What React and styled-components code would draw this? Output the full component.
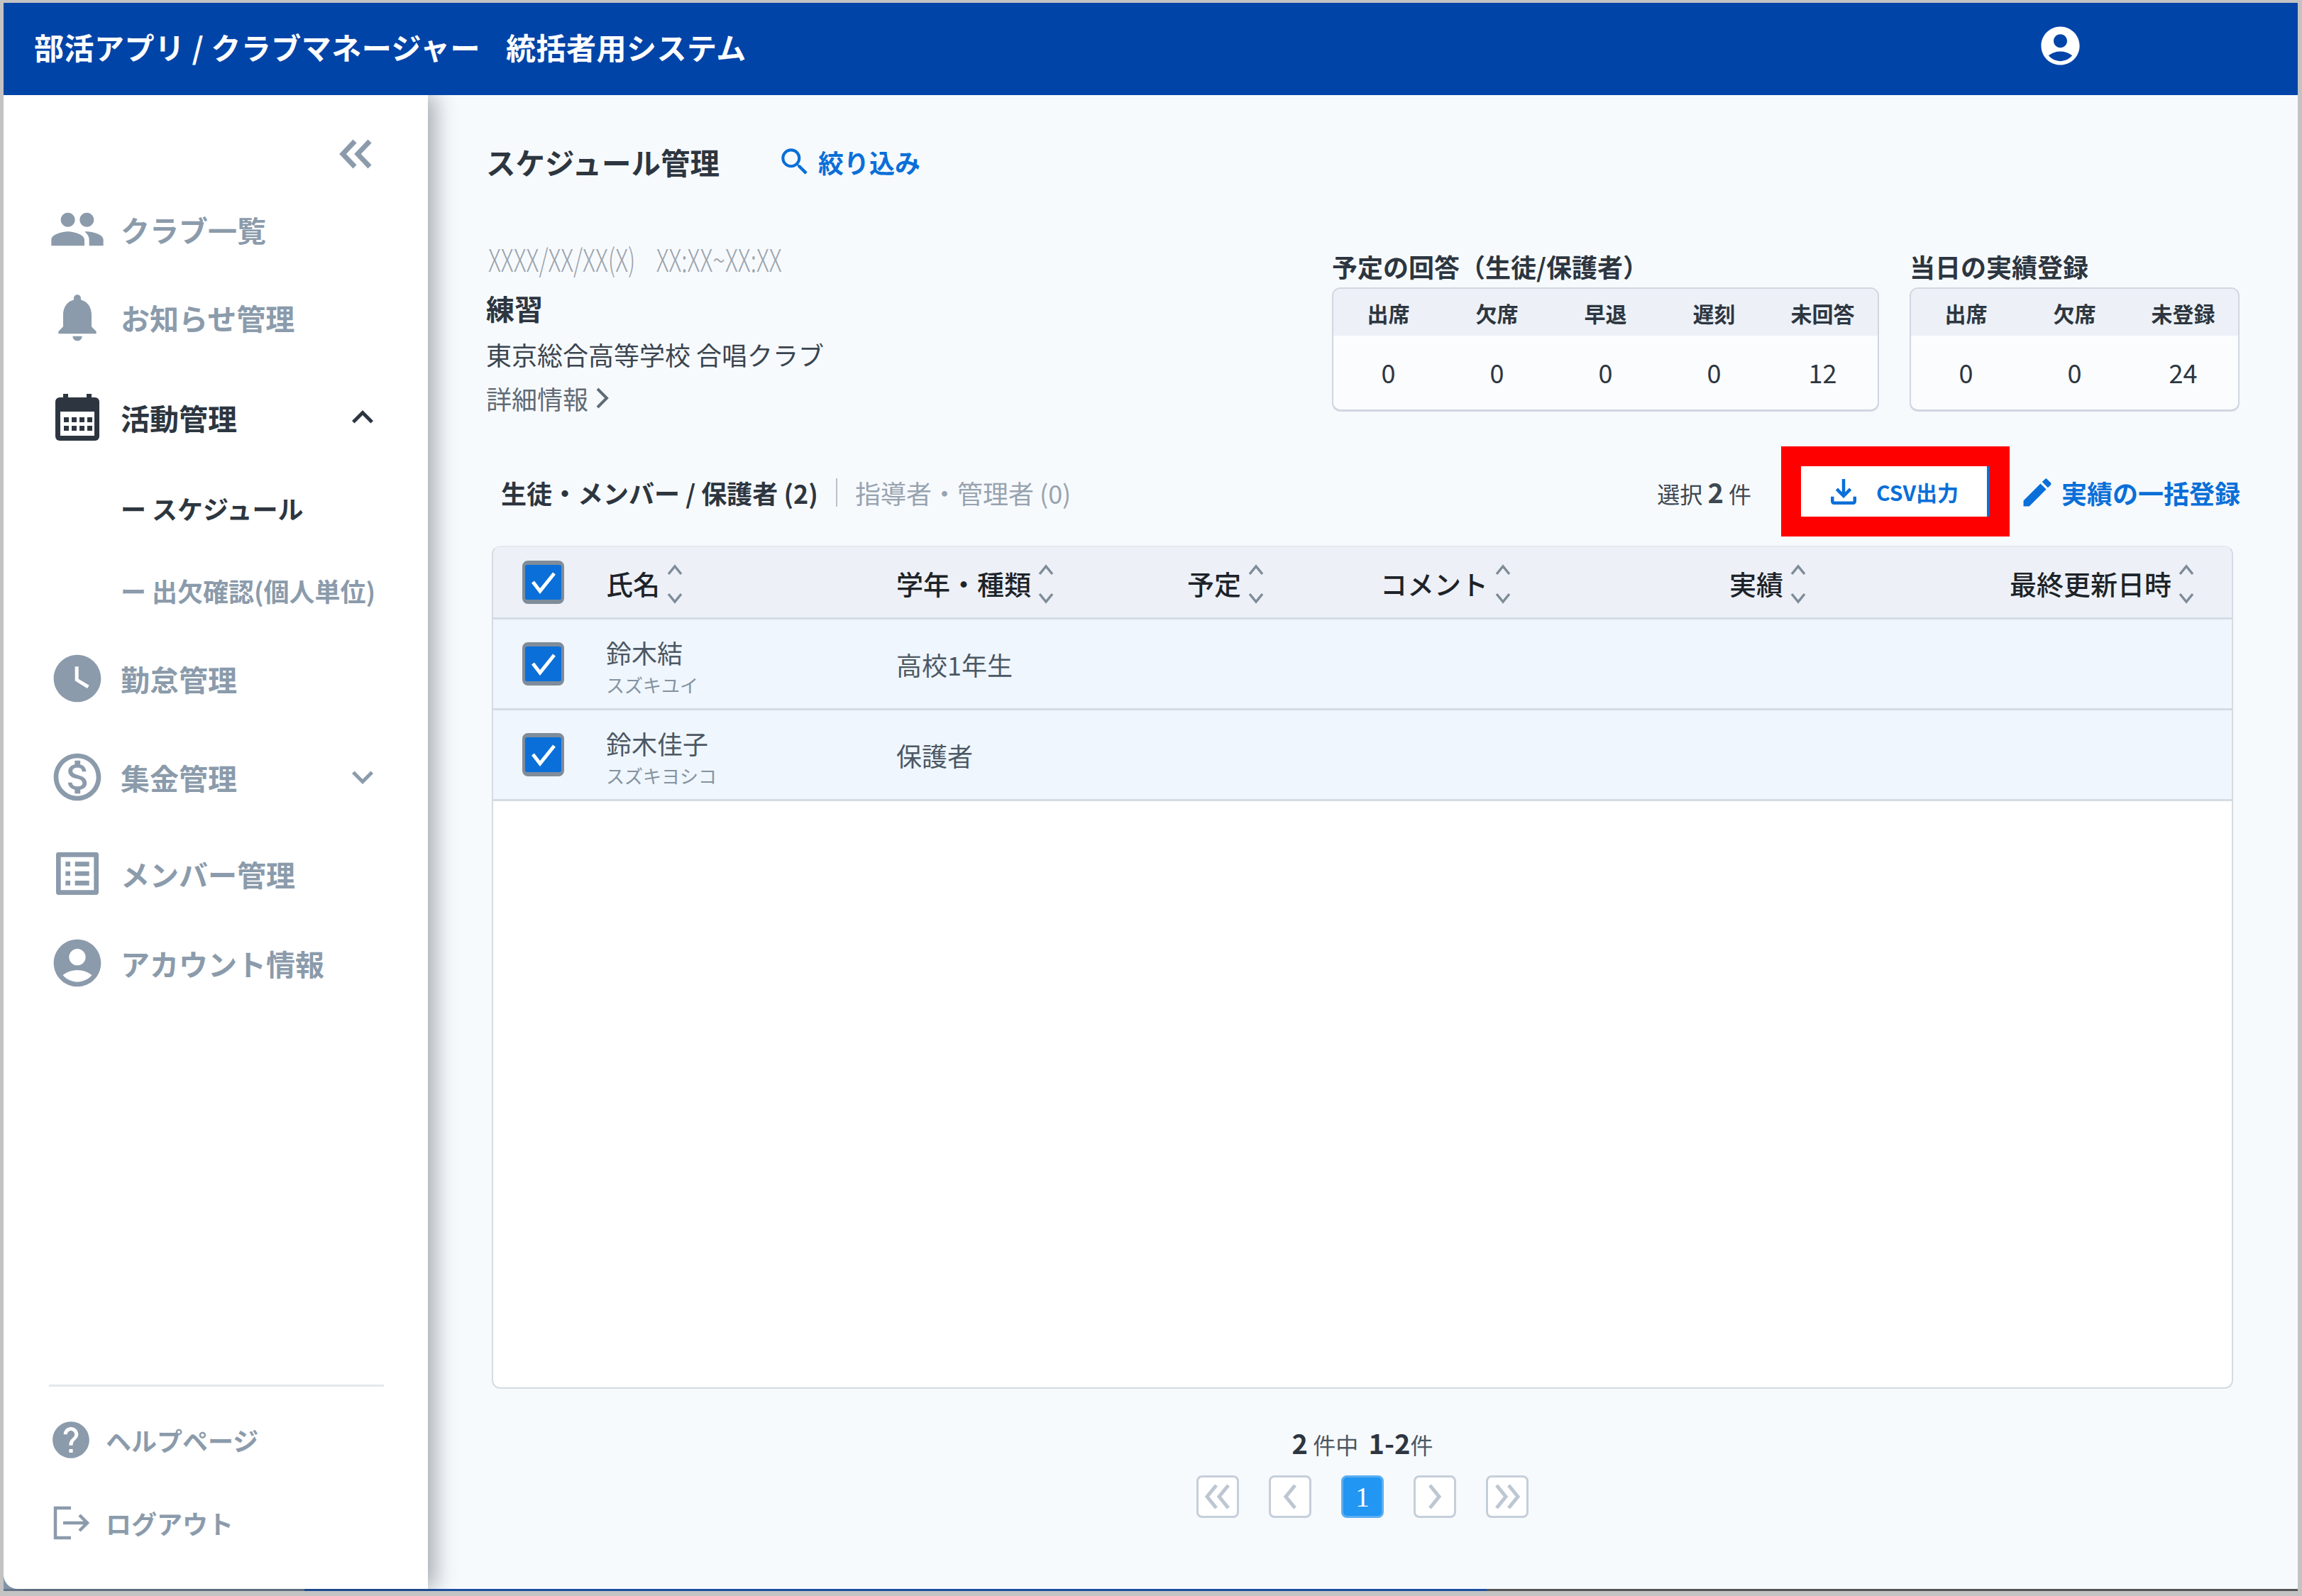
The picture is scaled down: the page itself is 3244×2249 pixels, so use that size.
import styled, { createGlobalStyle } from "styled-components";
import {
  MdPeople,
  MdNotifications,
  MdWatchLater,
  MdOutlineMonetizationOn,
  MdOutlineListAlt,
  MdAccountCircle,
  MdHelp,
  MdSearch,
  MdEdit,
  MdOutlineFileDownload,
  MdExpandLess,
  MdExpandMore,
} from "react-icons/md";

const GlobalStyle = createGlobalStyle`
  html, body {
    margin: 0;
    padding: 0;
  }
  body {
    font-family: "Noto Sans CJK JP", "Noto Sans", sans-serif;
    color: #2d3640;
  }
  * {
    box-sizing: border-box;
  }
`;

function CalendarIcon() {
  const dots = [];
  [33, 45].forEach((y) => {
    [13, 24, 35, 46].forEach((x) => {
      dots.push(<rect key={`${x}-${y}`} x={x - 1} y={y} width="7" height="7" fill="#2d3640" />);
    });
  });
  return (
    <svg width="62" height="66" viewBox="0 0 62 66">
      <rect x="0" y="5" width="62" height="61" rx="6" fill="#2d3640" />
      <rect x="11" y="0" width="7" height="10" fill="#2d3640" />
      <rect x="44" y="0" width="7" height="10" fill="#2d3640" />
      <rect x="7" y="25" width="48" height="34" fill="#fff" />
      {dots}
    </svg>
  );
}

function LogoutIcon() {
  return (
    <svg width="54" height="48" viewBox="0 0 54 48" fill="none" stroke="#8b9bab" strokeWidth="4.5">
      <path d="M27 3H5v42h22" />
      <path d="M16 24h33M39 13l11 11-11 11" />
    </svg>
  );
}

function Chevrons({ d, color = "#bcc7d2", width = 38, height = 34, stroke = 5 }) {
  return (
    <svg width={width} height={height} viewBox={`0 0 ${width} ${height}`} fill="none" stroke={color} strokeWidth={stroke}>
      <path d={d} />
    </svg>
  );
}

function SortIcon() {
  return (
    <SortSvg width="22" height="56" viewBox="0 0 22 56" fill="none" stroke="#7f8c99" strokeWidth="3.5">
      <path d="M2 14L11 3l9 11M2 42l9 11 9-11" />
    </SortSvg>
  );
}

function Checkbox() {
  return (
    <Check>
      <svg width="38" height="32" viewBox="0 0 38 32" fill="none" stroke="#fff" strokeWidth="5">
        <path d="M4 15l10 13L34 3" />
      </svg>
    </Check>
  );
}

const navItems = [
  { label: "クラブ一覧", icon: <MdPeople size={88} />, top: 26 },
  { label: "お知らせ管理", icon: <MdNotifications size={80} />, top: 24 },
  { label: "活動管理", icon: <CalendarIcon />, top: 41, active: true, arrow: "up" },
  { label: "スケジュール", sub: true, active: true, top: 28 },
  { label: "出欠確認(個人単位)", sub: true, top: 16 },
  { label: "勤怠管理", icon: <MdWatchLater size={82} />, top: 24 },
  { label: "集金管理", icon: <MdOutlineMonetizationOn size={82} />, top: 39, arrow: "down" },
  { label: "メンバー管理", icon: <MdOutlineListAlt size={82} />, top: 36 },
  { label: "アカウント情報", icon: <MdAccountCircle size={82} />, top: 26 },
];

const planHeads = ["出席", "欠席", "早退", "遅刻", "未回答"];
const planValues = [0, 0, 0, 0, 12];
const actualHeads = ["出席", "欠席", "未登録"];
const actualValues = [0, 0, 24];

const columns = ["氏名", "学年・種類", "予定", "コメント", "実績", "最終更新日時"];

const members = [
  { name: "鈴木結", kana: "スズキユイ", grade: "高校1年生" },
  { name: "鈴木佳子", kana: "スズキヨシコ", grade: "保護者" },
];

function SummaryCard({ title, heads, values }) {
  return (
    <div>
      <CardTitle>{title}</CardTitle>
      <Card>
        <CardHead $count={heads.length}>
          {heads.map((head) => (
            <span key={head}>{head}</span>
          ))}
        </CardHead>
        <CardBody $count={heads.length}>
          {values.map((value, index) => (
            <span key={index}>{value}</span>
          ))}
        </CardBody>
      </Card>
    </div>
  );
}

export default function App() {
  return (
    <>
      <GlobalStyle />
      <Frame>
        <Header>
          <AppTitle>
            <span>部活アプリ / クラブマネージャー</span>
            <span>統括者用システム</span>
          </AppTitle>
          <HeaderUser>
            <MdAccountCircle size={65} />
          </HeaderUser>
        </Header>
        <Shell>
          <Sidebar>
            <Collapse>
              <Chevrons d="M22 3L5 21l17 18M43 3L26 21l17 18" color="#8b9bab" width={48} height={42} stroke={7} />
            </Collapse>
            {navItems.map((item) =>
              item.sub ? (
                <SubItem key={item.label} $top={item.top} $active={item.active}>
                  <span>ー</span>
                  {item.label}
                </SubItem>
              ) : (
                <NavItem key={item.label} $top={item.top} $active={item.active}>
                  <NavIcon>{item.icon}</NavIcon>
                  <NavLabel>{item.label}</NavLabel>
                  {item.arrow === "up" && <MdExpandLess size={60} />}
                  {item.arrow === "down" && <MdExpandMore size={60} />}
                </NavItem>
              )
            )}
            <SideFooter>
              <FooterItem>
                <FooterIcon>
                  <MdHelp size={62} />
                </FooterIcon>
                ヘルプページ
              </FooterItem>
              <FooterItem $gap>
                <FooterIcon>
                  <LogoutIcon />
                </FooterIcon>
                ログアウト
              </FooterItem>
            </SideFooter>
          </Sidebar>
          <Main>
            <TitleRow>
              <PageTitle>スケジュール管理</PageTitle>
              <FilterLink>
                <MdSearch size={50} />
                絞り込み
              </FilterLink>
            </TitleRow>
            <InfoRow>
              <EventInfo>
                <DateLine>XXXX/XX/XX(X)&nbsp;&nbsp;&nbsp;&nbsp;XX:XX~XX:XX</DateLine>
                <EventName>練習</EventName>
                <ClubName>東京総合高等学校 合唱クラブ</ClubName>
                <DetailLink>
                  詳細情報
                  <Chevrons d="M3 3l13 13L3 29" color="#5f6b76" width={20} height={32} stroke={4} />
                </DetailLink>
              </EventInfo>
              <Cards>
                <SummaryCard title="予定の回答（生徒/保護者）" heads={planHeads} values={planValues} />
                <SummaryCard title="当日の実績登録" heads={actualHeads} values={actualValues} />
              </Cards>
            </InfoRow>
            <ActionRow>
              <Tabs>
                <TabActive>生徒・メンバー / 保護者 (2)</TabActive>
                <TabSeparator />
                <TabMuted>指導者・管理者 (0)</TabMuted>
              </Tabs>
              <Actions>
                <Selected>
                  選択 <b>2</b> 件
                </Selected>
                <Highlight>
                  <CsvButton>
                    <MdOutlineFileDownload size={54} />
                    CSV出力
                  </CsvButton>
                </Highlight>
                <BulkLink>
                  <MdEdit size={52} />
                  実績の一括登録
                </BulkLink>
              </Actions>
            </ActionRow>
            <Table>
              <HeadRow>
                <CheckCell>
                  <Checkbox />
                </CheckCell>
                {columns.map((column) => (
                  <HeadCell key={column}>
                    <span>{column}</span>
                    <SortIcon />
                  </HeadCell>
                ))}
              </HeadRow>
              {members.map((member) => (
                <BodyRow key={member.name}>
                  <CheckCell>
                    <Checkbox />
                  </CheckCell>
                  <NameCell>
                    <MemberName>{member.name}</MemberName>
                    <MemberKana>{member.kana}</MemberKana>
                  </NameCell>
                  <GradeCell>{member.grade}</GradeCell>
                </BodyRow>
              ))}
            </Table>
            <Pager>
              <PagerCount>
                <b>2</b> 件中 &nbsp;<b>1-2</b>件
              </PagerCount>
              <PagerButtons>
                <PageButton>
                  <Chevrons d="M17 1L4 17l13 16M34 1L21 17l13 16" />
                </PageButton>
                <PageButton>
                  <Chevrons d="M17 1L4 17l13 16" width={20} />
                </PageButton>
                <PageButton $active>1</PageButton>
                <PageButton>
                  <Chevrons d="M3 1l13 16L3 33" width={20} />
                </PageButton>
                <PageButton>
                  <Chevrons d="M4 1l13 16L4 33M21 1l13 16-13 16" />
                </PageButton>
              </PagerButtons>
            </Pager>
          </Main>
        </Shell>
        <BottomLine />
      </Frame>
    </>
  );
}

const Frame = styled.div`
  width: 3244px;
  height: 2249px;
  display: flex;
  flex-direction: column;
  background: #f7fafd;
  border-style: solid;
  border-color: #c3c3c3;
  border-width: 4px 6px 7px 5px;
  overflow: hidden;
`;

const Header = styled.header`
  height: 130px;
  flex-shrink: 0;
  display: flex;
  align-items: center;
  padding: 0 302px 8px 43px;
  background: #0044a8;
  color: #fff;
  position: relative;
  z-index: 2;
`;

const AppTitle = styled.h1`
  margin: 0;
  display: flex;
  gap: 36px;
  font-size: 42px;
  font-weight: 700;
  letter-spacing: 0.5px;
  white-space: nowrap;
`;

const HeaderUser = styled.div`
  margin-left: auto;
  display: flex;
  margin-bottom: 2px;
`;

const Shell = styled.div`
  flex: 1;
  min-height: 0;
  display: flex;
  background: #8a9bb0;
`;

const Sidebar = styled.nav`
  width: 598px;
  flex-shrink: 0;
  display: flex;
  flex-direction: column;
  padding: 53px 62px 63px 64px;
  background: #fff;
  border-bottom-left-radius: 20px;
  box-shadow: 10px 0 30px rgba(40, 52, 64, 0.4);
  position: relative;
  z-index: 1;
`;

const Collapse = styled.div`
  height: 60px;
  flex-shrink: 0;
  display: flex;
  align-items: center;
  justify-content: flex-end;
  padding-right: 15px;
`;

const NavItem = styled.div`
  height: 100px;
  flex-shrink: 0;
  margin-top: ${(p) => p.$top}px;
  display: flex;
  align-items: center;
  font-size: 41px;
  font-weight: 700;
  color: ${(p) => (p.$active ? "#2d3640" : "#8b9bab")};
`;

const NavIcon = styled.span`
  width: 80px;
  margin-right: 21px;
  display: flex;
  justify-content: center;
  flex-shrink: 0;
`;

const NavLabel = styled.span`
  flex: 1;
`;

const SubItem = styled.div`
  height: 100px;
  flex-shrink: 0;
  margin-top: ${(p) => p.$top}px;
  padding-left: 101px;
  display: flex;
  align-items: center;
  gap: 8px;
  white-space: nowrap;
  font-size: 36px;
  font-weight: 700;
  color: ${(p) => (p.$active ? "#2d3640" : "#8b9bab")};
`;

const SideFooter = styled.div`
  margin-top: auto;
  border-top: 3px solid #e4e7ea;
  padding-top: 45px;
`;

const FooterItem = styled.div`
  height: 60px;
  margin-top: ${(p) => (p.$gap ? 57 : 0)}px;
  display: flex;
  align-items: center;
  gap: 18px;
  font-size: 36px;
  font-weight: 700;
  color: #8b9bab;
`;

const FooterIcon = styled.span`
  width: 62px;
  display: flex;
  justify-content: center;
`;

const Main = styled.main`
  flex: 1;
  min-width: 0;
  padding: 64px 81px 0 82px;
  background: #f7fafd;
`;

const TitleRow = styled.div`
  height: 60px;
  display: flex;
  align-items: center;
`;

const PageTitle = styled.h2`
  margin: 0;
  font-size: 41.5px;
  font-weight: 700;
  color: #2d3640;
`;

const FilterLink = styled.a`
  margin-left: 81px;
  display: flex;
  align-items: center;
  gap: 8px;
  font-size: 36px;
  font-weight: 700;
  color: #0a6fd8;
`;

const InfoRow = styled.div`
  margin-top: 86px;
  padding-right: 1px;
  display: flex;
  justify-content: space-between;
`;

const EventInfo = styled.div`
  display: flex;
  flex-direction: column;
`;

const DateLine = styled.div`
  height: 44px;
  margin: -2px 0 0 3px;
  line-height: 44px;
  font-size: 44px;
  font-weight: 300;
  color: #9ba4ad;
  white-space: nowrap;
  transform: scaleX(0.75);
  transform-origin: left center;
`;

const EventName = styled.div`
  margin-top: 23px;
  height: 50px;
  line-height: 50px;
  font-size: 40px;
  font-weight: 700;
  color: #2d3640;
`;

const ClubName = styled.div`
  margin-top: 18px;
  height: 44px;
  line-height: 44px;
  font-size: 36px;
  color: #3a4550;
`;

const DetailLink = styled.a`
  margin-top: 18px;
  height: 44px;
  display: flex;
  align-items: center;
  gap: 10px;
  font-size: 36px;
  color: #5f6b76;
`;

const Cards = styled.div`
  padding-top: 9px;
  display: flex;
  gap: 43px;
`;

const CardTitle = styled.div`
  height: 52px;
  line-height: 44px;
  font-size: 36px;
  font-weight: 700;
  color: #2d3640;
  white-space: nowrap;
`;

const Card = styled.div`
  border: 2px solid #d0d7e0;
  border-bottom-width: 3px;
  border-radius: 12px;
  overflow: hidden;
  background: #fafcfe;
  height: 175px;
`;

const CardHead = styled.div`
  height: 66px;
  padding: 2px 1px 0;
  display: grid;
  grid-template-columns: repeat(${(p) => p.$count}, 153px);
  align-items: center;
  justify-items: center;
  background: #edf1f7;
  font-size: 30px;
  font-weight: 700;
  color: #2d3640;
`;

const CardBody = styled.div`
  height: 101px;
  padding: 0 1px;
  display: grid;
  grid-template-columns: repeat(${(p) => p.$count}, 153px);
  align-items: center;
  justify-items: center;
  font-size: 36px;
  color: #2d3640;
`;

const ActionRow = styled.div`
  margin-top: 46px;
  height: 127px;
  display: flex;
  align-items: center;
  justify-content: space-between;
`;

const Tabs = styled.div`
  margin-left: 21px;
  padding-top: 2px;
  display: flex;
  align-items: center;
  font-size: 36px;
  font-weight: 700;
`;

const TabActive = styled.span`
  color: #2d3640;
`;

const TabSeparator = styled.span`
  width: 2px;
  height: 40px;
  margin: 0 25px;
  background: #b9c2cb;
`;

const TabMuted = styled.span`
  font-weight: 400;
  color: #97a3b0;
`;

const Actions = styled.div`
  display: flex;
  align-items: center;
`;

const Selected = styled.span`
  margin-right: 42px;
  font-size: 32px;
  color: #3d4852;
  b {
    font-size: 38px;
  }
`;

const Highlight = styled.div`
  width: 322px;
  height: 127px;
  border: 28px solid #ff0000;
`;

const CsvButton = styled.a`
  width: 100%;
  height: 100%;
  display: flex;
  align-items: center;
  gap: 19px;
  padding-left: 33px;
  background: #fff;
  border-right: 4px solid #0a6fd8;
  font-size: 30px;
  font-weight: 700;
  color: #0a6fd8;
  svg {
    flex-shrink: 0;
  }
`;

const BulkLink = styled.a`
  margin-left: 13px;
  padding-top: 2px;
  display: flex;
  align-items: center;
  gap: 8px;
  font-size: 36px;
  font-weight: 700;
  color: #0a6fd8;
  white-space: nowrap;
`;

const Table = styled.div`
  margin: 13px 10px 0 8px;
  height: 1188px;
  background: #fff;
  border: 2px solid #d5dbe3;
  border-top-color: #e6e9ee;
  border-radius: 12px;
  overflow: hidden;
`;

const rowColumns = "159px 409px 410px 272px 492px 395px 1fr";

const HeadRow = styled.div`
  height: 102px;
  display: grid;
  grid-template-columns: ${rowColumns};
  align-items: center;
  background: #edf1f7;
  border-bottom: 3px solid #d5dbe3;
`;

const BodyRow = styled.div`
  height: 128px;
  display: grid;
  grid-template-columns: ${rowColumns};
  align-items: center;
  background: #eff6fd;
  border-bottom: 3px solid #d5dbe3;
`;

const CheckCell = styled.div`
  padding-left: 41px;
  display: flex;
`;

const Check = styled.span`
  width: 59px;
  height: 61px;
  display: flex;
  align-items: center;
  justify-content: center;
  background: #0a6fd8;
  border: solid #7f8c99;
  border-width: 6px 4px;
  border-radius: 8px;
`;

const HeadCell = styled.div`
  display: flex;
  align-items: center;
  gap: 10px;
  font-size: 38px;
  font-weight: 500;
  color: #1d2329;
  white-space: nowrap;
  span {
    padding-top: 2px;
  }
`;

const SortSvg = styled.svg`
  flex-shrink: 0;
  margin-top: 4px;
`;

const NameCell = styled.div`
  display: flex;
  flex-direction: column;
  padding-top: 8px;
`;

const MemberName = styled.span`
  line-height: 49px;
  font-size: 36px;
  color: #4c5864;
`;

const MemberKana = styled.span`
  line-height: 41px;
  font-size: 26px;
  color: #8592a0;
`;

const GradeCell = styled.div`
  font-size: 36px;
  color: #4c5864;
`;

const Pager = styled.div`
  margin: 52px 10px 0 8px;
  display: flex;
  flex-direction: column;
  align-items: center;
`;

const PagerCount = styled.div`
  height: 48px;
  line-height: 48px;
  font-size: 32px;
  color: #4c5864;
  b {
    font-size: 38px;
    color: #2d3640;
  }
`;

const PagerButtons = styled.div`
  margin-top: 22px;
  display: flex;
  gap: 42px;
`;

const PageButton = styled.span`
  width: 60px;
  height: 60px;
  display: flex;
  align-items: center;
  justify-content: center;
  border: 3px solid ${(p) => (p.$active ? "#5baef0" : "#c5cfda")};
  border-radius: 8px;
  background: ${(p) => (p.$active ? "#2196f3" : "#fff")};
  font-family: "Liberation Serif", serif;
  font-size: 40px;
  color: #fff;
`;

const BottomLine = styled.div`
  height: 3px;
  flex-shrink: 0;
  background: linear-gradient(to right, #6a7b8c 0, #6a7b8c 424px, #1c4fa0 424px, #1c4fa0 2090px, #555 2090px);
`;
